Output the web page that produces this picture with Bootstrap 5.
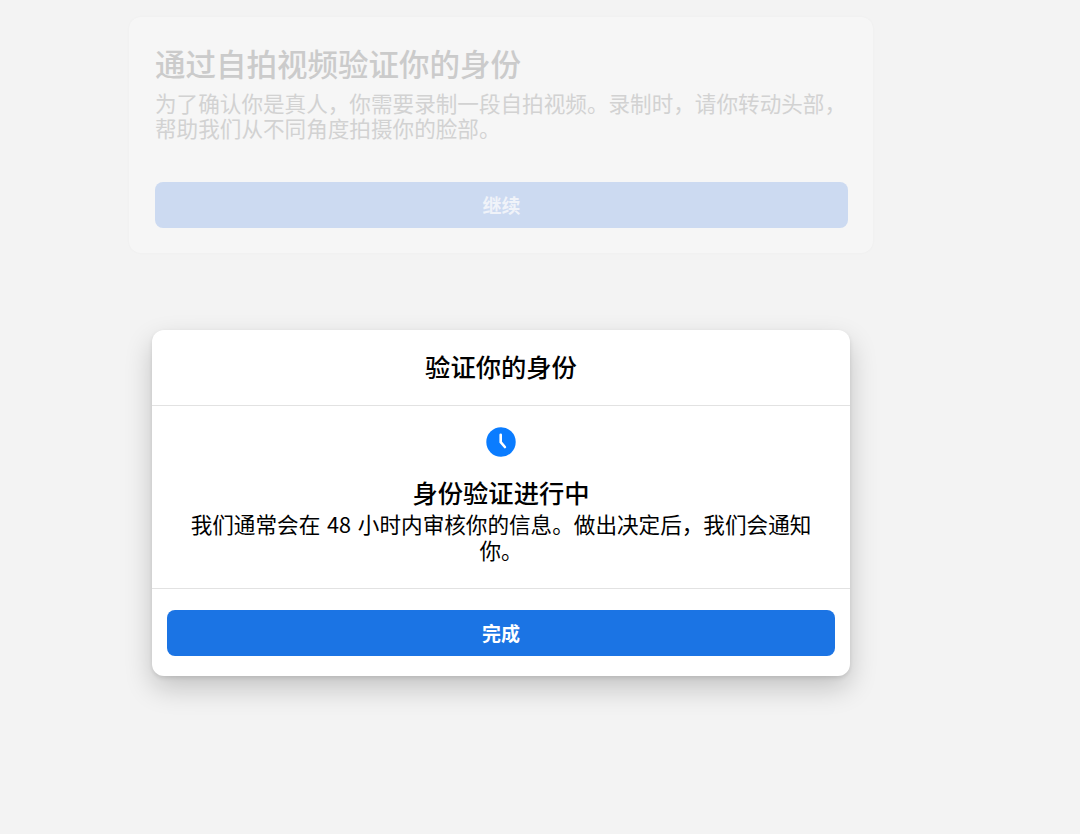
<!DOCTYPE html>
<html lang="zh-CN">
<head>
<meta charset="utf-8">
<title>验证你的身份</title>
<link rel="stylesheet" href="https://cdn.jsdelivr.net/npm/bootstrap@5.3.0/dist/css/bootstrap.min.css">
<style>
html,body{height:100%;}
body{background:#f3f3f3;font-family:"Noto Sans CJK SC","Noto Sans",sans-serif;color:#000;overflow:hidden;}
.bg-panel{width:744px;height:236px;margin:17px 0 0 129px;background:#f6f6f6;border-radius:12px;padding:25px 25px 0 26px;box-shadow:0 0 3px rgba(0,0,0,.03);}
.bg-title{font-size:30.5px;line-height:42px;font-weight:500;color:#cbcbcb;margin:0;}
.bg-text{font-size:21.6px;line-height:25px;color:#d2d2d2;margin:6px 0 0;height:52px;}
.bg-btn{margin-top:40px;height:46px;width:100%;border:0;border-radius:8px;background:#ccdaf1;color:#f0f3f9;font-size:19px;font-weight:700;line-height:43px;padding:0 0 2px;}
.dlg{width:698px;height:346px;margin:77px 0 0 152px;background:#fff;border-radius:12px;box-shadow:0 12px 28px rgba(0,0,0,.2),0 2px 4px rgba(0,0,0,.1);}
.dlg-head{height:76px;border-bottom:1px solid #e2e2e2;font-size:25.3px;font-weight:500;line-height:73px;text-align:center;}
.dlg-body{height:183px;border-bottom:1px solid #e2e2e2;text-align:center;padding:21px 30px 0;}
.clock{display:block;width:30px;height:30px;margin:0 auto;}
.dlg-sub{font-size:25.3px;font-weight:500;line-height:30px;margin:20px 0 0;}
.dlg-text{font-size:21.6px;line-height:26px;margin:4px 0 0;word-spacing:2px;}
.dlg-foot{padding:21px 15px 0;}
.done-btn{width:100%;height:46px;padding:0 0 2px;border:0;border-radius:8px;background:#1b74e4;color:#fff;font-size:19px;font-weight:700;line-height:43px;}
.done-btn:hover{background:#1b74e4;color:#fff;}
</style>
</head>
<body>
<section class="bg-panel">
  <h1 class="bg-title">通过自拍视频验证你的身份</h1>
  <p class="bg-text">为了确认你是真人，你需要录制一段自拍视频。录制时，请你转动头部，帮助我们从不同角度拍摄你的脸部。</p>
  <button class="btn bg-btn d-block" type="button">继续</button>
</section>
<div class="dlg" role="dialog">
  <div class="dlg-head">验证你的身份</div>
  <div class="dlg-body">
    <svg class="clock" viewBox="0 0 30 30" aria-hidden="true"><circle cx="15" cy="15" r="14.7" fill="#0a7cff"/><path d="M14.7 7.8V15.2L18.9 20" fill="none" stroke="#fff" stroke-width="2.6" stroke-linecap="round" stroke-linejoin="round"/></svg>
    <h2 class="dlg-sub">身份验证进行中</h2>
    <p class="dlg-text">我们通常会在 48 小时内审核你的信息。做出决定后，我们会通知你。</p>
  </div>
  <div class="dlg-foot"><button class="btn done-btn d-block" type="button">完成</button></div>
</div>
<script src="https://cdn.jsdelivr.net/npm/bootstrap@5.3.0/dist/js/bootstrap.bundle.min.js"></script>
</body>
</html>
